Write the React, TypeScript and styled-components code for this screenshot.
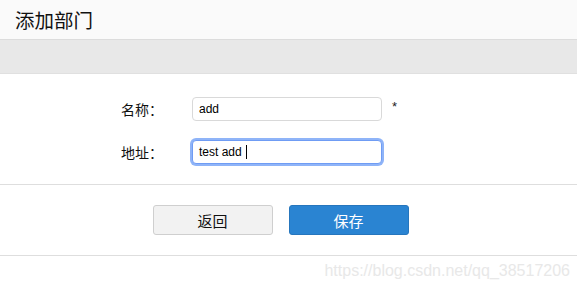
import styled, { createGlobalStyle } from "styled-components";

const GlobalStyle = createGlobalStyle`
  body {
    margin: 0;
    background: #ffffff;
    font-family: "Liberation Sans", "Noto Sans CJK SC", sans-serif;
    color: #111;
  }
`;

const Page = styled.div`
  width: 577px;
  height: 290px;
  overflow: hidden;
`;

const Header = styled.header`
  height: 40px;
  display: flex;
  align-items: center;
  padding-left: 15px;
  background-color: #fafafa;
  border-bottom: 1px solid #dcdcdc;
  box-sizing: border-box;
`;

const Title = styled.h1`
  margin: 0;
  font-size: 19.5px;
  font-weight: 400;
  color: #111;
  font-family: "Noto Sans CJK SC", sans-serif;
`;

const Band = styled.div`
  height: 33px;
  background-color: #e8e8e8;
  border-bottom: 1px solid #e0e0e0;
`;

const Form = styled.form`
  display: flex;
  flex-direction: column;
  gap: 19px;
  padding: 23px 0 20px 121px;
  border-bottom: 1px solid #dedede;
`;

const Row = styled.div`
  display: flex;
  align-items: center;
`;

const Label = styled.label`
  width: 71px;
  font-size: 14px;
  font-family: "Noto Sans CJK SC", sans-serif;
  color: #111;
`;

const Field = styled.div<{ focused?: boolean }>`
  width: 190px;
  height: 24px;
  box-sizing: border-box;
  display: flex;
  align-items: center;
  padding-left: 6px;
  font-size: 12px;
  color: #000;
  border-radius: 4px;
  border: 1px solid ${(p) => (p.focused ? "#6f9cf4" : "#d9d9d9")};
  box-shadow: ${(p) => (p.focused ? "0 0 0 2px #8fb4f8" : "none")};
  background: #fff;
`;

const Caret = styled.span`
  display: inline-block;
  width: 1px;
  height: 14px;
  margin-left: 4px;
  background: #000;
`;

const Required = styled.span`
  margin-left: 10px;
  font-size: 13px;
  color: #222;
  margin-top: -6px;
`;

const Actions = styled.div`
  display: flex;
  justify-content: center;
  gap: 16px;
  padding: 20px 16px 20px 0;
  border-bottom: 1px solid #dedede;
`;

const Button = styled.button<{ primary?: boolean }>`
  width: 120px;
  height: 30px;
  border-radius: 3px;
  font-size: 15px;
  font-family: "Noto Sans CJK SC", sans-serif;
  cursor: pointer;
  background-color: ${(p) => (p.primary ? "#2a84d2" : "#f2f2f2")};
  color: ${(p) => (p.primary ? "#ffffff" : "#111111")};
  border: 1px solid ${(p) => (p.primary ? "#2676bd" : "#cfcfcf")};
`;

const Watermark = styled.div`
  text-align: right;
  padding: 6px 7px 0 0;
  font-size: 16px;
  color: #e8e8e8;
`;

export default function App() {
  return (
    <Page>
      <GlobalStyle />
      <Header>
        <Title>添加部门</Title>
      </Header>
      <Band />
      <Form>
        <Row>
          <Label>名称：</Label>
          <Field>add</Field>
          <Required>*</Required>
        </Row>
        <Row>
          <Label>地址：</Label>
          <Field focused>
            test add
            <Caret />
          </Field>
        </Row>
      </Form>
      <Actions>
        <Button type="button">返回</Button>
        <Button type="button" primary>
          保存
        </Button>
      </Actions>
      <Watermark>https://blog.csdn.net/qq_38517206</Watermark>
    </Page>
  );
}
